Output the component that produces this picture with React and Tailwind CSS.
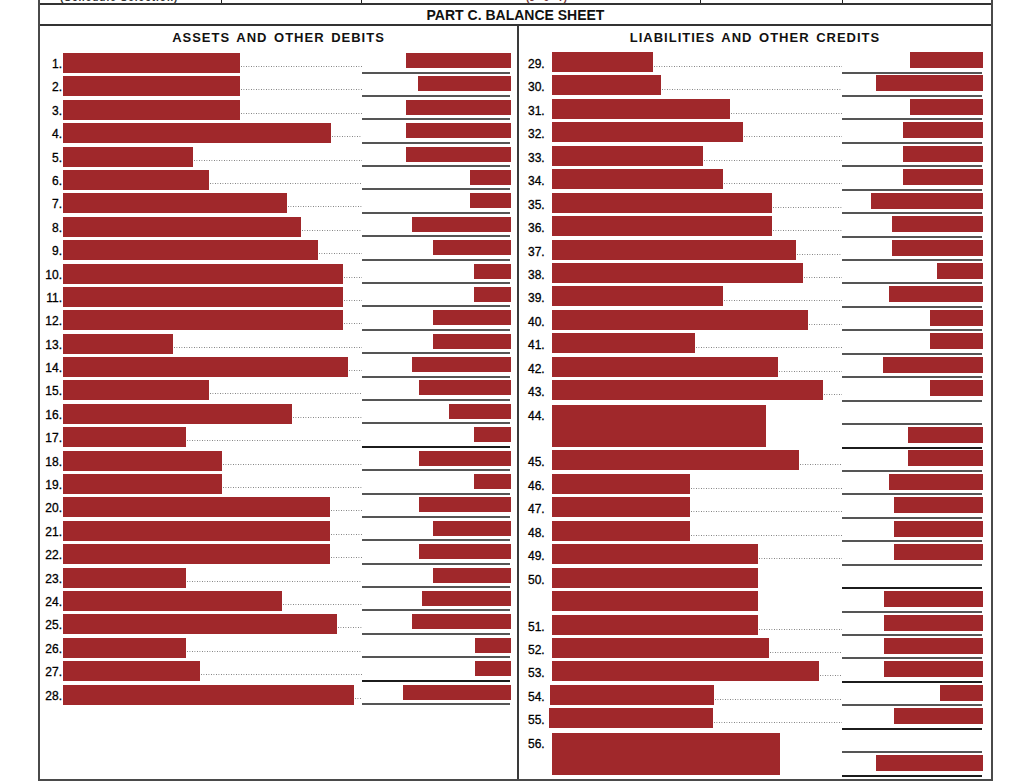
const LEFT = [
  [1, 240, 406], [2, 240, 418], [3, 240, 406], [4, 331, 406], [5, 193, 406],
  [6, 209, 470], [7, 287, 470], [8, 301, 412], [9, 318, 433], [10, 343, 474],
  [11, 343, 474], [12, 343, 433], [13, 173, 433], [14, 348, 412], [15, 209, 419],
  [16, 292, 449], [17, 186, 474, true], [18, 222, 419], [19, 222, 474], [20, 330, 419],
  [21, 330, 433], [22, 330, 419], [23, 186, 433], [24, 282, 422], [25, 337, 412],
  [26, 186, 475], [27, 200, 475, true], [28, 354, 403],
];

// label, bar end, amount start, extra
const RIGHT = [
  { n: 29, end: 653, amt: 910 }, { n: 30, end: 661, amt: 876 }, { n: 31, end: 730, amt: 910 },
  { n: 32, end: 743, amt: 903 }, { n: 33, end: 703, amt: 903 }, { n: 34, end: 723, amt: 903 },
  { n: 35, end: 772, amt: 871 }, { n: 36, end: 772, amt: 892 }, { n: 37, end: 796, amt: 892 },
  { n: 38, end: 803, amt: 937 }, { n: 39, end: 723, amt: 889 }, { n: 40, end: 808, amt: 930 },
  { n: 41, end: 695, amt: 930 }, { n: 42, end: 778, amt: 883 }, { n: 43, end: 823, amt: 930 },
  { n: 44, end: 766, amt: 908, tall: true, dark: true },
  { n: 45, end: 799, amt: 908 }, { n: 46, end: 690, amt: 889 }, { n: 47, end: 690, amt: 894 },
  { n: 48, end: 690, amt: 894 }, { n: 49, end: 758, amt: 894 },
  { n: 50, end: 758, amt: null, noDots: true, dark: true },
  { n: null, end: 758, amt: 884, noDots: true },
  { n: 51, end: 758, amt: 884 }, { n: 52, end: 769, amt: 884 }, { n: 53, end: 819, amt: 884, dark: true },
  { n: 54, end: 714, amt: 940, shift: -2 }, { n: 55, end: 713, amt: 894, shift: -3, dark: true },
  { n: 56, end: 780, amt: 876, tall: true, dark: true },
];

function Dots() {
  return (
    <div className="flex-1 mt-[14px] ml-[1px] h-[1px] bg-[linear-gradient(to_right,#777_1px,transparent_1px)] bg-[length:2.5px_1px]" />
  );
}

function Underline({ dark, w }) {
  return <div className={`h-[2px] ${w} ${dark ? 'bg-[#1c1c1c]' : 'bg-[#555]'}`} />;
}

function LeftRow({ n, end, amt, dark }) {
  return (
    <div className="flex h-[23.4px]">
      <div className="w-[22px] pt-[5px] text-right text-[12px] leading-[14px] text-black [-webkit-text-stroke:0.3px_black]">{n}.</div>
      <div className="ml-[1px] mt-[1px] h-[20px] bg-[#a0282b]" style={{ width: end - 63 }} />
      <Dots />
      <div className="w-[149px] flex flex-col">
        <div className="mt-[1px] h-[15px] flex justify-end">
          <div className="h-[15px] bg-[#a0282b]" style={{ width: 511 - amt }} />
        </div>
        <div className="mt-[3.5px]">
          <Underline dark={dark} w="w-[148px]" />
        </div>
      </div>
      <div className="w-[6px]" />
    </div>
  );
}

function RightAmount({ amt, dark }) {
  return (
    <div className="h-[23.44px] flex flex-col">
      <div className="h-[16px] flex justify-end">
        {amt && <div className="h-[16px] bg-[#a0282b]" style={{ width: 983 - amt }} />}
      </div>
      <div className="mt-[3.5px]">
        <Underline dark={dark} w="w-[140px]" />
      </div>
    </div>
  );
}

function RightRow({ n, end, amt, tall, noDots, shift = 0, dark }) {
  const start = 552 + shift;
  return (
    <div className={`flex pl-[9px] ${tall ? 'h-[46.88px]' : 'h-[23.44px]'}`}>
      <div className="pt-[5px] text-[12px] leading-[14px] text-black [-webkit-text-stroke:0.3px_black]" style={{ width: 24 + shift }}>
        {n ? `${n}.` : ''}
      </div>
      <div className={`bg-[#a0282b] ${tall ? 'h-[42px] mt-[1px]' : 'h-[20px]'}`} style={{ width: end - start }} />
      {tall || noDots ? <div className="flex-1" /> : <Dots />}
      <div className="w-[141px] flex flex-col">
        {tall && <RightAmount amt={null} />}
        <RightAmount amt={amt} dark={dark} />
      </div>
      <div className="w-[8px]" />
    </div>
  );
}

export default function App() {
  return (
    <div className="w-[1024px] h-[783px] bg-white overflow-hidden font-['Liberation_Sans',Arial,sans-serif] text-[#111]">
      <div className="ml-[38px] w-[955px] border-x-2 border-b-2 border-[#4a4a4a]">
        {/* tail of the table above */}
        <div className="h-[5px] flex overflow-hidden border-b-2 border-[#333]">
          <div className="w-[182px] h-[3px] border-r border-[#222] relative">
            <span className="absolute left-[20px] top-[-10px] text-[10px] font-bold tracking-[1px] text-[#333] whitespace-nowrap">(Schedule Selection)</span>
          </div>
          <div className="w-[140px] border-r border-[#222]" />
          <div className="w-[339px] border-r border-[#222] relative">
            <span className="absolute left-[164px] top-[-10px] text-[10px] font-bold text-[#7a3a3a] whitespace-nowrap">(3 - 9 - 7)</span>
          </div>
          <div className="w-[142px] border-r border-[#222]" />
          <div className="flex-1" />
        </div>
        <div className="h-[21px] flex items-center justify-center border-b-2 border-[#333]">
          <span className="text-[14px] font-bold leading-[16px] text-[#111]">PART C. BALANCE SHEET</span>
        </div>
        <div className="flex h-[753px]">
          <div className="w-[479px] border-r-2 border-[#3a3a3a]">
            <div className="h-[26px] pt-[4px] text-center text-[13px] font-bold leading-[15px] tracking-[1px] [word-spacing:2px] text-[#111]">
              ASSETS AND OTHER DEBITS
            </div>
            {LEFT.map(([n, end, amt, dark]) => (
              <LeftRow key={n} n={n} end={end} amt={amt} dark={dark} />
            ))}
          </div>
          <div className="flex-1">
            <div className="h-[26px] pt-[4px] text-center text-[13px] font-bold leading-[15px] tracking-[1px] [word-spacing:2px] text-[#111]">
              LIABILITIES AND OTHER CREDITS
            </div>
            {RIGHT.map((r, i) => (
              <RightRow key={i} {...r} />
            ))}
          </div>
        </div>
      </div>
    </div>
  );
}
